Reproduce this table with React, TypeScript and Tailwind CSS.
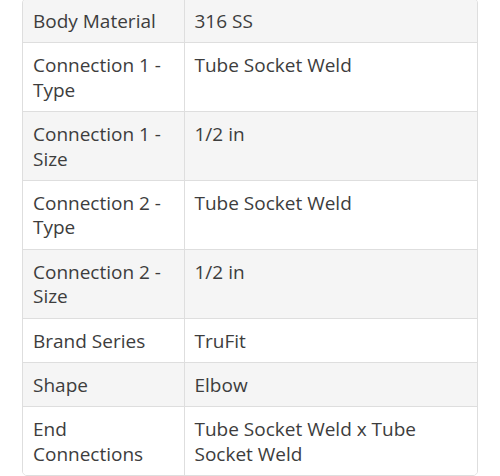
import React from "react";

const specs: [string, string][] = [
  ["Body Material", "316 SS"],
  ["Connection 1 - Type", "Tube Socket Weld"],
  ["Connection 1 - Size", "1/2 in"],
  ["Connection 2 - Type", "Tube Socket Weld"],
  ["Connection 2 - Size", "1/2 in"],
  ["Brand Series", "TruFit"],
  ["Shape", "Elbow"],
  ["End Connections", "Tube Socket Weld x Tube Socket Weld"],
];

export default function App() {
  return (
    <div className="w-[500px] h-[476px] overflow-hidden bg-white">
      <div
        className="ml-[22px] mt-[-2px] w-[456px] border border-[#dedede] rounded-[5px] overflow-hidden text-[19px] leading-[24.4px] text-[#3d3d3d]"
        style={{ fontFamily: '"Open Sans", "Liberation Sans", sans-serif' }}
      >
        <table className="w-full border-collapse">
          <tbody>
            {specs.map(([label, value], i) => (
              <tr
                key={label}
                className={
                  (i % 2 === 0 ? "bg-[#f5f5f5]" : "bg-white") +
                  (i > 0 ? " border-t border-[#dedede]" : "")
                }
              >
                <td className="w-[161px] align-top px-[10px] pt-[10px] pb-[9px] border-r border-[#dedede]">
                  {label}
                </td>
                <td className="align-top px-[10px] pt-[10px] pb-[9px]">
                  {value}
                </td>
              </tr>
            ))}
          </tbody>
        </table>
      </div>
    </div>
  );
}
